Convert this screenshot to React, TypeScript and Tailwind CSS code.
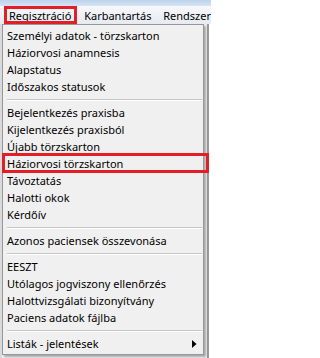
const SEP = 'sep'

const items: string[] = [
  'Személyi adatok - törzskarton',
  'Háziorvosi anamnesis',
  'Alapstatus',
  'Időszakos statusok',
  SEP,
  'Bejelentkezés praxisba',
  'Kijelentkezés praxisból',
  'Újabb törzskarton',
  'Háziorvosi törzskarton',
  'Távoztatás',
  'Halotti okok',
  'Kérdőív',
  SEP,
  'Azonos paciensek összevonása',
  SEP,
  'EESZT',
  'Utólagos jogviszony ellenőrzés',
  'Halottvizsgálati bizonyítvány',
  'Paciens adatok fájlba',
  SEP,
]

export default function App() {
  return (
    <div className="relative h-[358px] w-[211px] overflow-hidden bg-white font-['Noto_Sans','Liberation_Sans',sans-serif] text-[11px] leading-none text-black">
      {/* window title strip */}
      <div className="h-[6px] bg-gradient-to-b from-[#bcd3ec] to-[#d6e4f3]" />

      {/* menu bar */}
      <div className="flex h-[18px] items-center bg-gradient-to-b from-[#f6f8fb] to-[#e6ebf2] pl-[9px]">
        <span className="w-[77px]">Regisztráció</span>
        <span className="w-[81px]">Karbantartás</span>
        <span className="whitespace-nowrap">Rendszer</span>
      </div>

      {/* window content behind the popup */}
      <div className="flex h-[334px] bg-[#eef0f2]">
        <div className="w-[2px] bg-[#d8dadd]" />
        <div className="flex-1" />
        <div className="w-[2px] bg-[#9a9a9a]" />
        <div className="w-[2px] bg-white" />
      </div>

      {/* dropdown */}
      <div className="absolute left-[2px] top-[24px] w-[202px] border border-[#979797] bg-[#f0f0f0] py-[2px] shadow-[2px_2px_2px_rgba(0,0,0,0.3)]">
        {items.map((label, i) =>
          label === SEP ? (
            <div key={i} className="flex h-[9px] items-center pl-[4px] pr-[1px]">
              <div className="h-px w-full bg-[#c5c5c5] shadow-[0_1px_0_#ffffff]" />
            </div>
          ) : (
            <div key={i} className="flex h-[17px] items-center whitespace-nowrap pl-[4px]">
              {label}
            </div>
          ),
        )}
        <div className="flex h-[17px] items-center justify-between pl-[4px] pr-[6px]">
          <span>Listák - jelentések</span>
          <svg width="5" height="8" viewBox="0 0 5 8">
            <path d="M0 0 L4.5 4 L0 8 Z" fill="#000" />
          </svg>
        </div>
      </div>

      {/* red annotation boxes */}
      <div className="pointer-events-none absolute left-[4px] top-[6px] h-[18px] w-[73px] border-[3px] border-[#e41e26]" />
      <div className="pointer-events-none absolute left-[2px] top-[153px] h-[20px] w-[207px] border-[3px] border-[#e41e26]" />
    </div>
  )
}
